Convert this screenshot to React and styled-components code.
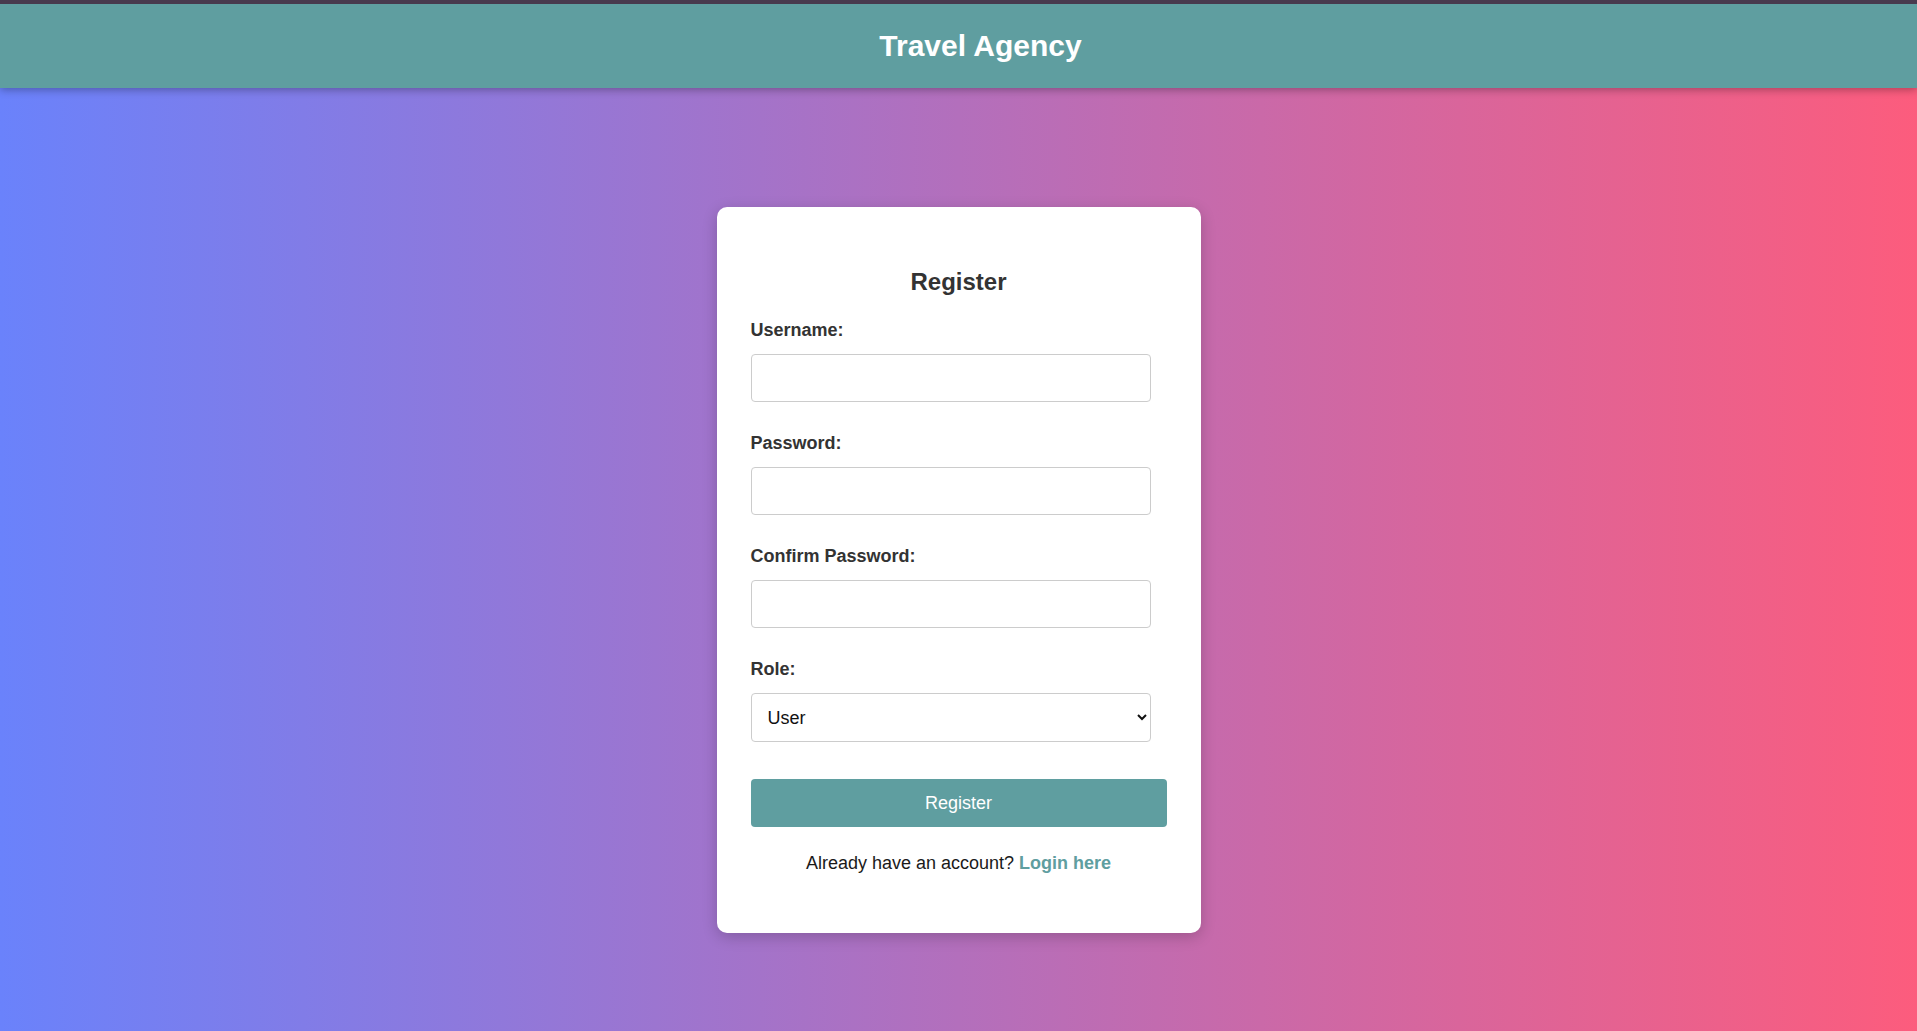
import React from 'react'
import styled, { createGlobalStyle } from 'styled-components';

const GlobalStyle = createGlobalStyle`
    * {
        box-sizing: border-box;
    }
    body {
        margin: 0;
        min-height: 100vh;
        font-family: "Liberation Sans", Arial, sans-serif;
        background: linear-gradient(to right, #6a82fb, #fc5c7d);
    }
`;

function App() {
  return (
    <>
      <GlobalStyle />
      <Header>
        <Title>Travel Agency</Title>
      </Header>
      <Main>
        <Card>
          <Heading>Register</Heading>
          <Field>
            <Label htmlFor="username">Username:</Label>
            <Input id="username" type="text" />
          </Field>
          <Field>
            <Label htmlFor="password">Password:</Label>
            <Input id="password" type="password" />
          </Field>
          <Field>
            <Label htmlFor="confirm">Confirm Password:</Label>
            <Input id="confirm" type="password" />
          </Field>
          <Field>
            <Label htmlFor="role">Role:</Label>
            <Select id="role" defaultValue="user">
              <option value="user">User</option>
              <option value="admin">Admin</option>
            </Select>
          </Field>
          <Button type="button">Register</Button>
          <Footer>
            Already have an account? <LoginLink href="#">Login here</LoginLink>
          </Footer>
        </Card>
      </Main>
    </>
  )
}

const Header = styled.header`
    height: 88px;
    padding-left: 44px;
    border-top: 4px solid #483a4e;
    background: #5f9ea0;
    display: flex;
    justify-content: center;
    align-items: center;
    box-shadow: 0 2px 8px rgba(0, 0, 0, 0.3);
`;

const Title = styled.h1`
    margin: 0;
    color: #ffffff;
    font-size: 30px;
    font-weight: bold;
    line-height: 34px;
`;

const Main = styled.main`
    display: flex;
    justify-content: center;
    padding-top: 119px;
`;

const Card = styled.div`
    width: 484px;
    padding: 40px 34px;
    background: #ffffff;
    border-radius: 10px;
    box-shadow: 0 4px 15px rgba(0, 0, 0, 0.2);
`;

const Heading = styled.h2`
    margin: 21px 0 25px;
    text-align: center;
    color: #333333;
    font-size: 24px;
    line-height: 27px;
`;

const Field = styled.div`
    margin-bottom: 31px;
`;

const Label = styled.label`
    display: block;
    margin-bottom: 13px;
    color: #333333;
    font-size: 18px;
    font-weight: bold;
    line-height: 21px;
`;

const Input = styled.input`
    display: block;
    width: 400px;
    height: 48px;
    padding: 0 12px;
    border: 1px solid #cccccc;
    border-radius: 4px;
    font-family: inherit;
    font-size: 18px;
    outline: none;
`;

const Select = styled.select`
    display: block;
    width: 400px;
    height: 49px;
    padding: 0 10px 0 12px;
    border: 1px solid #cccccc;
    border-radius: 4px;
    background: #ffffff;
    color: #111111;
    font-family: inherit;
    font-size: 18px;
    outline: none;
`;

const Button = styled.button`
    display: block;
    width: 100%;
    height: 48px;
    margin-top: 37px;
    border: none;
    border-radius: 4px;
    background: #5f9ea0;
    color: #ffffff;
    font-family: inherit;
    font-size: 18px;
    cursor: pointer;
`;

const Footer = styled.p`
    margin: 26px 0 19px;
    text-align: center;
    color: #1a1a1a;
    font-size: 18px;
    line-height: 21px;
`;

const LoginLink = styled.a`
    color: #5f9ea0;
    font-weight: bold;
    text-decoration: none;
`;

export default App;
